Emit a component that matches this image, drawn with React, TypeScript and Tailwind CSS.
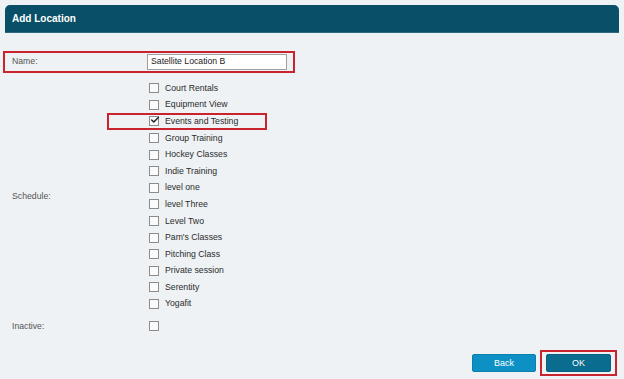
import { Check } from 'lucide-react';

const schedules = [
  'Court Rentals',
  'Equipment View',
  'Events and Testing',
  'Group Training',
  'Hockey Classes',
  'Indie Training',
  'level one',
  'level Three',
  'Level Two',
  "Pam's Classes",
  'Pitching Class',
  'Private session',
  'Serentity',
  'Yogafit',
];

function Box({ checked }: { checked?: boolean }) {
  return (
    <span className="relative flex h-[10px] w-[10px] shrink-0 items-center justify-center border border-[#8c8c8c] bg-[#fbfbfb]">
      {checked && <Check className="absolute -top-[2px] left-[0px] h-[10px] w-[10px] text-[#222]" strokeWidth={3.5} />}
    </span>
  );
}

function App() {
  return (
    <div
      className="flex h-[379px] w-[624px] flex-col bg-[#eef2f4] text-[8.7px] text-[#333]"
      style={{ fontFamily: '"Liberation Sans", Arial, sans-serif' }}
    >
      <div className="mx-[5px] mt-[5px] flex h-[28px] items-center rounded-t-[5px] border-b border-[#2d6a80] bg-[#094f67] pl-[7px]">
        <h1 className="text-[10px] font-bold text-white">Add Location</h1>
      </div>

      <div className="ml-[3px] mt-[18px] flex h-[22px] w-[292px] items-center border-2 border-[#c9232d]">
        <span className="w-[142px] pl-[7px] text-[#555]">Name:</span>
        <div className="flex h-[16px] w-[140px] items-center border border-[#a0a0a0] bg-white pl-[3px] text-[#222]">
          Satellite Location B
        </div>
      </div>

      <div className="mt-[7px] flex">
        <div className="flex w-[149px] items-center pl-[12px] text-[#555]">Schedule:</div>
        <div className="flex flex-col">
          {schedules.map((s) => (
            <div key={s} className="relative flex h-[16.6px] items-center gap-[6px]">
              {s === 'Events and Testing' && (
                <div className="absolute -left-[42px] top-[0px] h-[17px] w-[160px] border-2 border-[#c9232d]" />
              )}
              <Box checked={s === 'Events and Testing'} />
              <span className="text-[#2b2b2b]">{s}</span>
            </div>
          ))}
        </div>
      </div>

      <div className="mt-[7px] flex h-[14px] items-center">
        <div className="w-[149px] pl-[12px] text-[#555]">Inactive:</div>
        <Box />
      </div>

      <div className="mt-[17px] flex justify-end gap-[4px] pr-[7px]">
        <button className="mt-[4px] flex h-[18px] w-[64px] items-center justify-center rounded-[2px] border border-[#0b7fae] bg-[#0d91c4] text-[9px] text-white">
          Back
        </button>
        <div className="border-2 border-[#c9232d] px-[4px] py-[2px]">
          <button className="flex h-[18px] w-[65px] items-center justify-center rounded-[2px] border border-[#07617f] bg-[#0a6c8e] text-[9px] text-white">
            OK
          </button>
        </div>
      </div>
    </div>
  );
}

export default App;
